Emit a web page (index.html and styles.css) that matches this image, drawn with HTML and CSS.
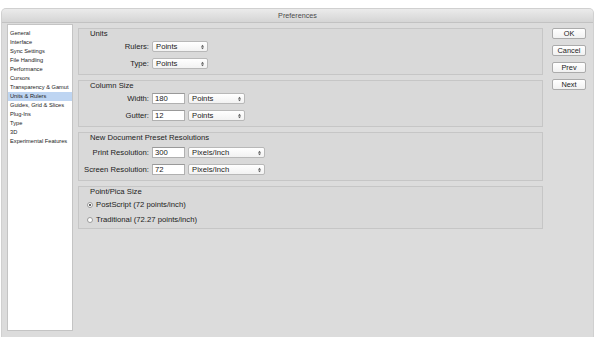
FILE: index.html
```html
<!DOCTYPE html>
<html lang="en">
<head>
    <meta charset="UTF-8">
    <title>Preferences</title>
    <link rel="stylesheet" href="styles.css">
</head>
<body>
    <div class="window">
        <div class="titlebar">Preferences</div>
        <div class="content">
            <ul class="sidebar">
                <li>General</li>
                <li>Interface</li>
                <li>Sync Settings</li>
                <li>File Handling</li>
                <li>Performance</li>
                <li>Cursors</li>
                <li>Transparency &amp; Gamut</li>
                <li class="selected">Units &amp; Rulers</li>
                <li>Guides, Grid &amp; Slices</li>
                <li>Plug-Ins</li>
                <li>Type</li>
                <li>3D</li>
                <li>Experimental Features</li>
            </ul>

            <div class="main">
                <div class="group group-units">
                    <div class="group-title">Units</div>
                    <div class="rows">
                        <div class="row">
                            <span class="label">Rulers:</span>
                            <span class="select sel-short">Points<svg class="arrows" viewBox="0 0 4 7"><path d="M0 3 L2 0.5 L4 3 Z M0 4 L2 6.5 L4 4 Z"/></svg></span>
                        </div>
                        <div class="row">
                            <span class="label">Type:</span>
                            <span class="select sel-short">Points<svg class="arrows" viewBox="0 0 4 7"><path d="M0 3 L2 0.5 L4 3 Z M0 4 L2 6.5 L4 4 Z"/></svg></span>
                        </div>
                    </div>
                </div>

                <div class="group">
                    <div class="group-title">Column Size</div>
                    <div class="rows">
                        <div class="row">
                            <span class="label">Width:</span>
                            <span class="field">180</span>
                            <span class="select sel-mid">Points<svg class="arrows" viewBox="0 0 4 7"><path d="M0 3 L2 0.5 L4 3 Z M0 4 L2 6.5 L4 4 Z"/></svg></span>
                        </div>
                        <div class="row">
                            <span class="label">Gutter:</span>
                            <span class="field">12</span>
                            <span class="select sel-mid">Points<svg class="arrows" viewBox="0 0 4 7"><path d="M0 3 L2 0.5 L4 3 Z M0 4 L2 6.5 L4 4 Z"/></svg></span>
                        </div>
                    </div>
                </div>

                <div class="group group-res">
                    <div class="group-title">New Document Preset Resolutions</div>
                    <div class="rows">
                        <div class="row">
                            <span class="label">Print Resolution:</span>
                            <span class="field">300</span>
                            <span class="select sel-long">Pixels/Inch<svg class="arrows" viewBox="0 0 4 7"><path d="M0 3 L2 0.5 L4 3 Z M0 4 L2 6.5 L4 4 Z"/></svg></span>
                        </div>
                        <div class="row">
                            <span class="label">Screen Resolution:</span>
                            <span class="field">72</span>
                            <span class="select sel-long">Pixels/Inch<svg class="arrows" viewBox="0 0 4 7"><path d="M0 3 L2 0.5 L4 3 Z M0 4 L2 6.5 L4 4 Z"/></svg></span>
                        </div>
                    </div>
                </div>

                <div class="group group-pica">
                    <div class="group-title">Point/Pica Size</div>
                    <div class="rows">
                        <div class="row">
                            <span class="radio checked"></span>
                            <span>PostScript (72 points/inch)</span>
                        </div>
                        <div class="row">
                            <span class="radio"></span>
                            <span>Traditional (72.27 points/inch)</span>
                        </div>
                    </div>
                </div>
            </div>

            <div class="buttons">
                <div class="button">OK</div>
                <div class="button">Cancel</div>
                <div class="button">Prev</div>
                <div class="button">Next</div>
            </div>
        </div>
    </div>
</body>
</html>
```

FILE: styles.css
```css
body {
    margin: 0;
    background-color: #fff;
    font-family: "Liberation Sans", Arial, sans-serif;
    color: #222;
}
.window {
    margin: 9px 7px 0 2px;
    width: 591px;
    height: 328px;
    background-color: #dcdcdc;
    border-radius: 4px 4px 0 0;
    box-shadow: 0 0 0 1px #d0d0d0;
    display: flex;
    flex-direction: column;
}
.titlebar {
    height: 13px;
    line-height: 13px;
    text-align: center;
    font-size: 7.2px;
    color: #4a4a4a;
    background: linear-gradient(#ebebeb, #d5d5d5);
    border-bottom: 1px solid #c2c2c2;
    border-radius: 4px 4px 0 0;
}
.content {
    flex: 1;
    display: flex;
    padding: 0 7px 6px 5px;
}
.sidebar {
    list-style: none;
    margin: 1px 0 0 0;
    padding: 4px 0 0 0;
    width: 64px;
    background-color: #fff;
    border: 1px solid #c4c4c4;
    font-size: 5.7px;
}
.sidebar li {
    height: 9px;
    line-height: 9px;
    padding-left: 2px;
    white-space: nowrap;
}
.sidebar li.selected {
    background-color: #bed5f2;
}
.main {
    width: 465px;
    margin-left: 5px;
    display: flex;
    flex-direction: column;
    gap: 5px;
    padding-top: 5px;
    font-size: 7.7px;
}
.group {
    border: 1px solid #c6c6c6;
    background-color: #d9d9d9;
    padding: 1px 0 5px;
}
.group-title {
    line-height: 8px;
    height: 8px;
    padding-left: 11px;
}
.rows {
    display: flex;
    flex-direction: column;
    gap: 6px;
    margin-top: 3px;
}
.group-res .rows {
    margin-top: 5px;
}
.group-pica .rows {
    gap: 4px;
}
.group-pica {
    padding-bottom: 3px;
}
.row {
    display: flex;
    align-items: center;
    height: 11px;
}
.label {
    width: 70px;
    margin-right: 3px;
    text-align: right;
    white-space: nowrap;
}
.field {
    box-sizing: border-box;
    width: 33px;
    height: 11px;
    line-height: 10px;
    padding-left: 2px;
    background-color: #fff;
    border: 1px solid #b0b0b0;
    border-top-color: #999;
    margin-right: 3px;
}
.select {
    box-sizing: border-box;
    height: 11px;
    line-height: 9px;
    padding-left: 3px;
    background: linear-gradient(#ffffff, #f2f2f2);
    border: 1px solid #b8b8b8;
    border-radius: 2px;
    display: flex;
    justify-content: space-between;
    align-items: center;
}
.sel-short {
    width: 56px;
}
.sel-mid {
    width: 57px;
}
.sel-long {
    width: 77px;
}
.arrows {
    width: 3px;
    height: 6px;
    margin-right: 3px;
    fill: #555;
}
.radio {
    box-sizing: border-box;
    width: 6px;
    height: 6px;
    margin: 0 3px 0 8px;
    border: 1px solid #9a9a9a;
    border-radius: 50%;
    background-color: #fff;
    position: relative;
}
.radio.checked::after {
    content: "";
    position: absolute;
    left: 1px;
    top: 1px;
    width: 2px;
    height: 2px;
    border-radius: 50%;
    background-color: #333;
}
.buttons {
    margin-left: 9px;
    padding-top: 5px;
    display: flex;
    flex-direction: column;
    gap: 6px;
}
.button {
    box-sizing: border-box;
    width: 34px;
    height: 11px;
    line-height: 9px;
    text-align: center;
    font-size: 7.4px;
    background: linear-gradient(#ffffff, #f1f1f1);
    border: 1px solid #ababab;
    border-radius: 2px;
}
```
